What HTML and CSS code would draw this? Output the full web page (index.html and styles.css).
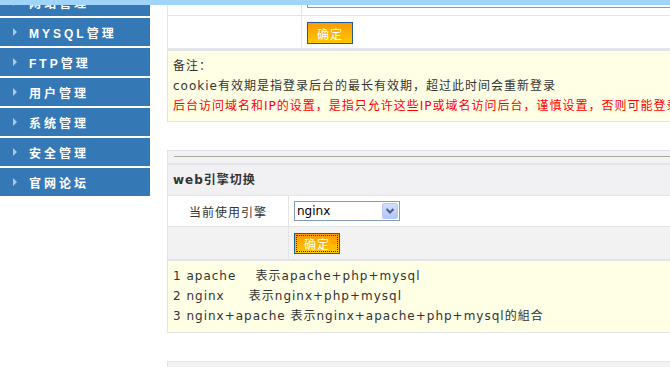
FILE: index.html
```html
<!DOCTYPE html>
<html lang="zh-CN">
<head>
    <meta charset="UTF-8">
    <meta name="viewport" content="width=device-width, initial-scale=1.0">
    <title>引擎设置 - 主机管理</title>
    <link rel="stylesheet" href="styles.css">
</head>
<body>
    <!-- 顶部条 -->
    <div class="topbar"></div>

    <div class="layout">
        <!-- 左侧菜单 -->
        <ul class="menu">
            <li><span class="arrow"></span>网站管理</li>
            <li><span class="arrow"></span>MYSQL管理</li>
            <li><span class="arrow"></span>FTP管理</li>
            <li><span class="arrow"></span>用户管理</li>
            <li><span class="arrow"></span>系统管理</li>
            <li><span class="arrow"></span>安全管理</li>
            <li><span class="arrow"></span>官网论坛</li>
        </ul>

        <div class="main">
            <!-- 后台登录设置 -->
            <div class="panel">
                <div class="row row-input">
                    <div class="label"></div>
                    <div class="value"><input type="text" class="text-input"></div>
                </div>
                <div class="row row-submit">
                    <div class="label"></div>
                    <div class="value"><button type="button" class="btn">确定</button></div>
                </div>
                <div class="note">
                    <p>备注：</p>
                    <p>cookie有效期是指登录后台的最长有效期，超过此时间会重新登录</p>
                    <p class="warn">后台访问域名和IP的设置，是指只允许这些IP或域名访问后台，谨慎设置，否则可能登录不了后台</p>
                </div>
            </div>

            <!-- web引擎切换 -->
            <div class="panel panel-box">
                <div class="rule"></div>
                <div class="title">web引擎切换</div>
                <div class="row row-plain">
                    <div class="label label-center">当前使用引擎</div>
                    <div class="value">
                        <div class="select-wrap">
                            <select class="select" name="engine">
                                <option>nginx</option>
                                <option>apache</option>
                                <option>nginx+apache</option>
                            </select>
                            <span class="select-btn">
                                <svg width="14" height="14" viewBox="0 0 14 14">
                                    <polyline points="3.5,5 7,8.5 10.5,5" fill="none" stroke="#4c5f86" stroke-width="2"/>
                                </svg>
                            </span>
                        </div>
                    </div>
                </div>
                <div class="row row-gray">
                    <div class="label label-center"></div>
                    <div class="value"><button type="button" class="btn btn-focus">确定</button></div>
                </div>
                <div class="note note-engine">
                    <p>1 apache&nbsp;&nbsp;&nbsp;&nbsp;表示apache+php+mysql</p>
                    <p>2 nginx&nbsp;&nbsp;&nbsp;&nbsp;&nbsp;表示nginx+php+mysql</p>
                    <p>3 nginx+apache 表示nginx+apache+php+mysql的組合</p>
                </div>
            </div>

            <div class="panel panel-box panel-next"></div>
        </div>
    </div>
</body>
</html>
```

FILE: styles.css
```css
body {
    margin: 0;
    font-family: "DejaVu Sans", "Noto Sans CJK SC", sans-serif;
    font-size: 12px;
    color: #333;
    background-color: #fff;
    overflow: hidden;
}

.topbar {
    height: 5px;
    background-color: #a0d4fa;
}

.layout {
    display: flex;
    height: 362px;
    overflow: hidden;
}

/* 左侧菜单 */
.menu {
    list-style: none;
    margin: -17px 0 0;
    padding: 0;
    width: 150px;
    flex: none;
}

.menu li {
    display: flex;
    align-items: center;
    height: 28px;
    margin-bottom: 2px;
    padding-left: 13px;
    background-color: #3578b6;
    color: #fff;
    font-family: "Liberation Sans", "Noto Sans CJK SC", sans-serif;
    font-weight: bold;
    letter-spacing: 3px;
}

.arrow {
    width: 0;
    height: 0;
    border-left: 4px solid #a9c9e8;
    border-top: 4px solid transparent;
    border-bottom: 4px solid transparent;
    margin-right: 12px;
}

/* 主体 */
.main {
    flex: none;
    width: 560px;
    margin-left: 17px;
    margin-top: -21px;
}

.panel {
    border-left: 1px solid #e3e3e8;
}

.row {
    display: flex;
    border-bottom: 1px solid #e3e3e8;
}

.label {
    width: 133px;
    flex: none;
    border-right: 1px solid #e3e3e8;
}

.value {
    flex: 1;
    padding-left: 5px;
    display: flex;
    align-items: center;
}

.row-input {
    height: 31px;
}

.row-input .value {
    align-items: flex-start;
    padding-top: 4px;
}

.text-input {
    box-sizing: border-box;
    width: 420px;
    height: 20px;
    border: 1px solid #7f9db9;
    margin: 0;
}

.row-submit {
    height: 32px;
    border-bottom: none;
}

.row-submit .value {
    padding-top: 2px;
}

.btn {
    box-sizing: border-box;
    width: 46px;
    height: 22px;
    padding: 0;
    border: 1px solid #1f5d96;
    background: linear-gradient(#ff9a00, #ffc800);
    color: #fff;
    font-family: "DejaVu Sans", "Noto Sans CJK SC", sans-serif;
    font-size: 12px;
    letter-spacing: 1px;
    cursor: pointer;
}

.btn-focus {
    height: 21px;
    outline: 1px dotted #1a3a96;
    outline-offset: -3px;
}

.note {
    background-color: #ffffe5;
    border-top: 3px solid #e2e4ea;
    border-bottom: 1px solid #e3e3e6;
    padding: 5px;
    letter-spacing: 1px;
    white-space: nowrap;
}

.note p {
    margin: 0;
    line-height: 20px;
}

.warn {
    color: #ff0000;
}

/* web引擎切换 */
.panel-box {
    margin-top: 28px;
    border-top: 1px solid #e3e3e8;
    background-color: #f2f2f4;
}

.rule {
    height: 1px;
    background-color: #aca899;
    margin: 5px 0 6px 6px;
}

.title {
    height: 30px;
    line-height: 30px;
    padding-left: 5px;
    border-top: 2px solid #e2e3e9;
    border-bottom: 1px solid #e3e3e8;
    background-color: #f1f1f3;
    font-weight: bold;
    letter-spacing: 1px;
}

.row-plain {
    height: 30px;
    background-color: #fff;
}

.label-center {
    width: 120px;
    display: flex;
    align-items: center;
    justify-content: center;
    letter-spacing: 1px;
}

.row-gray {
    height: 32px;
    background-color: #f2f2f2;
    border-bottom: 2px solid #e2e3e9;
}

.select-wrap {
    position: relative;
    width: 106px;
    height: 20px;
}

.select {
    appearance: none;
    -webkit-appearance: none;
    box-sizing: border-box;
    width: 106px;
    height: 20px;
    margin: 0;
    padding: 0 0 0 2px;
    border: 1px solid #7f9db9;
    border-radius: 0;
    background-color: #fff;
    color: #000;
    font-family: "DejaVu Sans", sans-serif;
    font-size: 12px;
}

.select-btn {
    position: absolute;
    top: 2px;
    right: 2px;
    width: 16px;
    height: 16px;
    box-sizing: border-box;
    border: 1px solid #b7c9f2;
    border-radius: 2px;
    background: linear-gradient(#d0defc, #b2c7f6);
    display: flex;
    align-items: center;
    justify-content: center;
    pointer-events: none;
}

.note-engine {
    border-top: none;
    padding: 5px 5px 6px;
}

.panel-next {
    height: 40px;
}
```
